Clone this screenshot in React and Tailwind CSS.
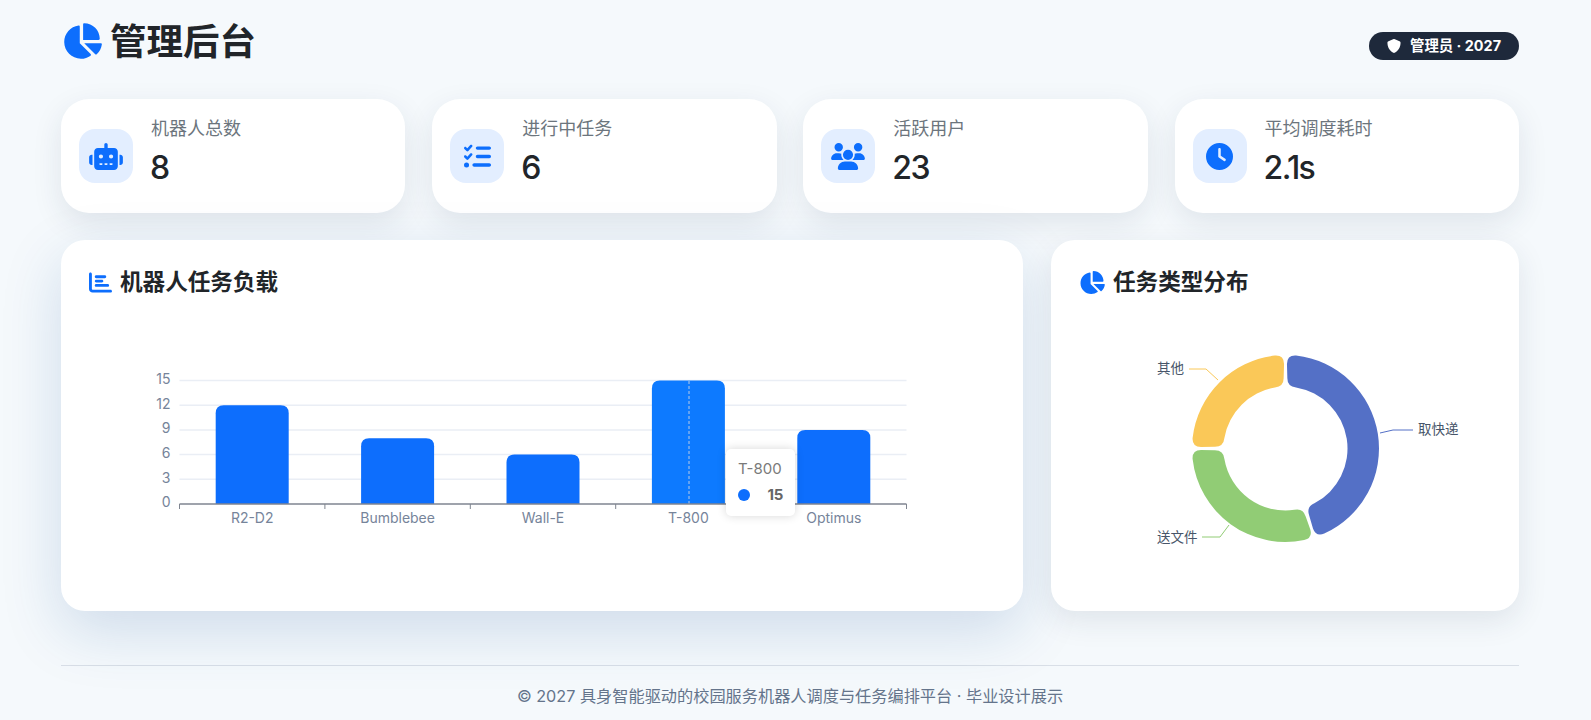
import React from 'react';
import { FaChartPie, FaChartBar, FaRobot, FaListCheck, FaUsers, FaClock, FaShield } from 'react-icons/fa6';

const stats = [
  { label: '机器人总数', value: '8', icon: FaRobot, iconClass: 'h-[27px] w-[34px]' },
  { label: '进行中任务', value: '6', icon: FaListCheck, iconClass: 'h-[27px] w-[27px]' },
  { label: '活跃用户', value: '23', icon: FaUsers, iconClass: 'h-[27px] w-[34px]' },
  { label: '平均调度耗时', value: '2.1s', icon: FaClock, iconClass: 'h-[27px] w-[27px]' },
];

const bars = [
  { name: 'R2-D2', value: 12 },
  { name: 'Bumblebee', value: 8 },
  { name: 'Wall-E', value: 6 },
  { name: 'T-800', value: 15 },
  { name: 'Optimus', value: 9 },
];

// chart geometry, in page pixels
const AXIS_LEFT = 179.5;
const AXIS_BOTTOM = 504;
const STEP_X = 145.4;
const STEP_Y = 8.23;
const BAR_W = 73;

const polar = (cx, cy, r, deg) => {
  const a = ((deg - 90) * Math.PI) / 180;
  return [cx + r * Math.cos(a), cy + r * Math.sin(a)];
};

// donut slice with rounded corners
const slicePath = (start, end, r0, r1, cr, gap) => {
  const cx = 1285.5;
  const cy = 448.5;
  const a0o = start + (gap / r1) * 57.3;
  const a1o = end - (gap / r1) * 57.3;
  const a0i = start + (gap / r0) * 57.3;
  const a1i = end - (gap / r0) * 57.3;
  const dO = (cr / r1) * 57.3;
  const dI = (cr / r0) * 57.3;
  const p = (r, d) => polar(cx, cy, r, d).map((n) => n.toFixed(2)).join(' ');
  return [
    `M ${p(r1, a0o + dO)}`,
    `A ${r1} ${r1} 0 0 1 ${p(r1, a1o - dO)}`,
    `Q ${p(r1, a1o)} ${p(r1 - cr, a1o)}`,
    `L ${p(r0 + cr, a1i)}`,
    `Q ${p(r0, a1i)} ${p(r0, a1i - dI)}`,
    `A ${r0} ${r0} 0 0 0 ${p(r0, a0i + dI)}`,
    `Q ${p(r0, a0i)} ${p(r0 + cr, a0i)}`,
    `L ${p(r1 - cr, a0o)}`,
    `Q ${p(r1, a0o)} ${p(r1, a0o + dO)}`,
    'Z',
  ].join(' ');
};

const slices = [
  { start: 0, end: 162, color: '#5470c6' },
  { start: 162, end: 270, color: '#91cc75' },
  { start: 270, end: 360, color: '#fac858' },
];

const StatCard = ({ label, value, icon: Icon, iconClass }) => (
  <div className="flex-1 h-[114px] bg-white rounded-[28px] p-[18px] flex items-center gap-[18px] shadow-[0_10px_30px_rgba(30,50,80,0.1)]">
    <div className="w-[54px] h-[54px] rounded-2xl bg-[#e3eeff] flex items-center justify-center text-[#0d6efd] shrink-0">
      <Icon className={iconClass} />
    </div>
    <div>
      <div className="text-[18px] leading-[22px] mt-[1px] text-[#6c757d]">{label}</div>
      <div className="mt-[8px] mb-[7px] -ml-[1px] text-[32px] leading-[40px] font-[550] text-[#212529] tracking-[-0.05em]">{value}</div>
    </div>
  </div>
);

const BarChart = () => (
  <div className="relative mt-[9px]">
    <svg width="906" height="290" viewBox="89 310 906 290" className="block">
      {[1, 2, 3, 4, 5].map((i) => {
        const y = AXIS_BOTTOM - i * 3 * STEP_Y;
        return <line key={i} x1={AXIS_LEFT} x2={906.5} y1={y} y2={y} stroke="#eaeef5" strokeWidth="1.5" />;
      })}
      {bars.map((b, i) => {
        const h = b.value * STEP_Y;
        const x = AXIS_LEFT + i * STEP_X + (STEP_X - BAR_W) / 2;
        const y = AXIS_BOTTOM - h;
        return (
          <path
            key={b.name}
            d={`M ${x} ${AXIS_BOTTOM} V ${y + 8} Q ${x} ${y} ${x + 8} ${y} H ${x + BAR_W - 8} Q ${x + BAR_W} ${y} ${x + BAR_W} ${y + 8} V ${AXIS_BOTTOM} Z`}
            fill={b.name === 'T-800' ? '#0d7aff' : '#0d6efd'}
          />
        );
      })}
      <line x1="689" x2="689" y1="381" y2="504" stroke="#7fb0ee" strokeWidth="1.5" strokeDasharray="3 2" />
      <line x1={AXIS_LEFT} x2="906.5" y1={AXIS_BOTTOM} y2={AXIS_BOTTOM} stroke="#7f8590" strokeWidth="1.3" />
      {[0, 1, 2, 3, 4, 5].map((i) => (
        <line key={i} x1={AXIS_LEFT + i * STEP_X} x2={AXIS_LEFT + i * STEP_X} y1={AXIS_BOTTOM} y2={AXIS_BOTTOM + 5} stroke="#7f8590" />
      ))}
      {[0, 3, 6, 9, 12, 15].map((v) => (
        <text key={v} x="170.5" y={AXIS_BOTTOM - v * STEP_Y - 0.5} textAnchor="end" dominantBaseline="middle" fontSize="14" fill="#76849a">
          {v}
        </text>
      ))}
      {bars.map((b, i) => (
        <text key={b.name} x={AXIS_LEFT + (i + 0.5) * STEP_X} y="519.5" textAnchor="middle" dominantBaseline="middle" fontSize="14" fill="#76849a">
          {b.name}
        </text>
      ))}
    </svg>
    {/* hover tooltip */}
    <div className="absolute left-[637px] top-[139px] w-[69px] h-[67px] bg-white rounded-[5px] shadow-[0_0_10px_rgba(0,0,0,0.16)] pl-[12px] pr-[12px] py-[9px]">
      <div className="text-[15px] leading-[21px] text-[#7a7a7a]">T-800</div>
      <div className="mt-[5px] flex items-center justify-between text-[15px] leading-[21px]">
        <span className="w-3 h-3 rounded-full bg-[#0d6efd]" />
        <span className="font-bold text-[#666] tracking-[-0.02em]">15</span>
      </div>
    </div>
  </div>
);

const DonutChart = () => (
  <svg width="468" height="290" viewBox="1051 310 468 290" className="block mt-[9px] -mx-[28px]">
    {slices.map((s) => (
      <path key={s.color} d={slicePath(s.start, s.end, 62, 93.5, 9, 1.6)} fill={s.color} />
    ))}
    <polyline points="1380,433 1393,430 1413,430" fill="none" stroke="#5470c6" />
    <polyline points="1218,380 1206,369 1189,369" fill="none" stroke="#fac858" />
    <polyline points="1229,525 1220,537 1202,537" fill="none" stroke="#91cc75" />
    <text x="1418" y="430" dominantBaseline="middle" fontSize="13.5" fill="#475569">取快递</text>
    <text x="1157" y="369" dominantBaseline="middle" fontSize="13.5" fill="#475569">其他</text>
    <text x="1157" y="538" dominantBaseline="middle" fontSize="13.5" fill="#475569">送文件</text>
  </svg>
);

export default function App() {
  return (
    <div className="min-h-screen bg-[#f5f9fc] pl-[61px] pr-[72px] pt-[20px] font-['Inter','Noto_Sans_CJK_SC',sans-serif] overflow-hidden">
      {/* Header */}
      <header className="flex items-center justify-between h-[52px]">
        <h1 className="flex items-center gap-[8px] mb-2 text-[36.5px] leading-[43px] font-bold text-[#212529]">
          <FaChartPie className="text-[#0d6efd] h-[36px] w-[40px] ml-[1px] -mt-[2px]" />
          <span>管理后台</span>
        </h1>
        <div className="flex items-center gap-[9px] h-[28px] px-[18px] rounded-full bg-[#1e293b] text-white text-[14.4px] font-bold">
          <FaShield className="text-[14px]" />
          <span>管理员 · 2027</span>
        </div>
      </header>

      {/* Stat cards */}
      <section className="mt-[27px] flex gap-[26.7px]">
        {stats.map((s) => (
          <StatCard key={s.label} {...s} />
        ))}
      </section>

      {/* Charts */}
      <section className="mt-[27px] flex gap-[28px]">
        <div className="flex-1 h-[371px] bg-white rounded-[24px] px-[28px] pt-[23px] shadow-[0_20px_60px_rgba(20,80,150,0.17)]">
          <h2 className="flex items-center gap-2 text-[22.6px] leading-[38px] font-bold text-[#212529]">
            <FaChartBar className="text-[#0d6efd] h-[23px] w-[23px]" />
            <span>机器人任务负载</span>
          </h2>
          <BarChart />
        </div>
        <div className="w-[468px] h-[371px] bg-white rounded-[24px] px-[28px] pt-[23px] shadow-[0_10px_30px_rgba(30,50,80,0.1)]">
          <h2 className="flex items-center gap-2 text-[22.6px] leading-[38px] font-bold text-[#212529]">
            <FaChartPie className="text-[#0d6efd] h-[23px] w-[26px]" />
            <span>任务类型分布</span>
          </h2>
          <DonutChart />
        </div>
      </section>

      {/* Footer */}
      <footer className="mt-[54px] border-t border-[#d9dfe7] pt-[18px] pb-[10px] text-center text-[16.2px] leading-[24px] text-[#64748b]">
        © 2027 具身智能驱动的校园服务机器人调度与任务编排平台 · 毕业设计展示
      </footer>
    </div>
  );
}
